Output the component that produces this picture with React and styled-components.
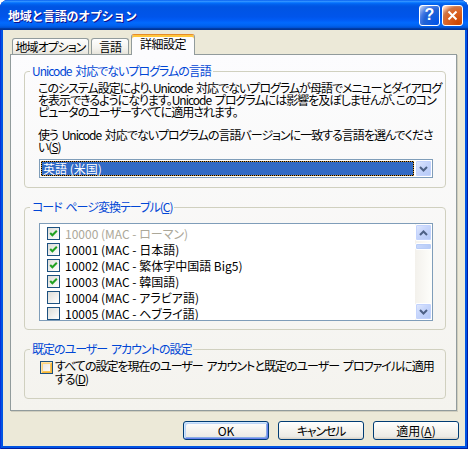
import React from 'react'
import styled, { createGlobalStyle, css } from 'styled-components'

const GlobalStyle = createGlobalStyle`
  html, body { margin: 0; padding: 0; background: #fff; }
  body {
    font-family: "Noto Sans CJK JP", "Noto Sans", sans-serif;
    font-size: 12px;
    font-feature-settings: "palt";
    letter-spacing: -1px;
    word-spacing: 2px;
    color: #000;
  }
`

const Window = styled.div`
  width: 468px;
  height: 449px;
  display: flex;
  flex-direction: column;
  background: #0054e3;
  border-radius: 8px 8px 0 0;
  overflow: hidden;
  box-shadow: inset 1px 0 #0831d9, inset -1px 0 #001ea0, inset 0 -1px #001ea0;
`

const TitleBar = styled.div`
  flex: none;
  height: 30px;
  display: flex;
  align-items: center;
  padding: 0 5px 0 8px;
  background: linear-gradient(to bottom, #0058ee 0%, #3593ff 4%, #288eff 6%, #127dff 8%, #036ffc 10%, #0262ee 14%, #0057e5 20%, #0054e3 24%, #0055eb 56%, #005bf5 66%, #026afe 76%, #0062ef 86%, #0052d6 92%, #0040ab 94%, #003092 100%);
`

const TitleText = styled.div`
  flex: 1;
  color: #fff;
  font-weight: bold;
  font-size: 12px;
  font-feature-settings: normal;
  letter-spacing: -0.3px;
  text-shadow: 1px 1px #0f1089;
`

const CaptionButton = styled.div`
  width: 21px;
  height: 21px;
  box-sizing: border-box;
  margin-left: 2px;
  border: 1px solid #fff;
  border-radius: 3px;
  display: flex;
  align-items: center;
  justify-content: center;
  color: #fff;
  font-family: "Liberation Sans", sans-serif;
  font-weight: bold;
  font-size: 16px;
  letter-spacing: 0;
  background: ${p => p.$close
    ? 'radial-gradient(circle at 80% 90%, #cc4600 0%, #dc6527 55%, #cd7546 70%, #ffccb2 90%, #fff 100%)'
    : 'radial-gradient(circle at 90% 90%, #0054e9 0%, #2263d5 55%, #4479e4 70%, #a3bbec 90%, #fff 100%)'};
`

const Body = styled.div`
  flex: 1;
  margin: 0 3px 3px;
  background: #ece9d8;
  padding: 4px 8px 0 7px;
  display: flex;
  flex-direction: column;
`

const TabRow = styled.div`
  height: 20px;
  display: flex;
  align-items: flex-end;
  gap: 2px;
  padding-left: 2px;
`

const Tab = styled.div`
  box-sizing: border-box;
  width: ${p => p.$w}px;
  height: 16px;
  border: 1px solid #919b9c;
  border-bottom: none;
  border-radius: 3px 3px 0 0;
  background: linear-gradient(#fefefe, #f4f3ee 60%, #e6e4db);
  display: flex;
  align-items: center;
  justify-content: center;
  line-height: 13px;
  white-space: nowrap;
  ${p => p.$active && css`
    position: relative;
    z-index: 1;
    height: 21px;
    margin-bottom: -1px;
    padding-bottom: 3px;
    border-top: 1px solid #e68b2c;
    background: #fcfcfe;
    box-shadow: inset 0 2px #ffc73c;
    letter-spacing: -0.5px;
  `}
`

const Panel = styled.div`
  box-sizing: border-box;
  height: 357px;
  border: 1px solid #919b9c;
  background: linear-gradient(#fcfcfe, #f4f3ee);
  padding: 9px 10px 0 13px;
  box-shadow: 1px 1px #d0cebf;
`

const Group = styled.fieldset`
  margin: 0;
  padding: 0;
  min-width: 0;
  border: 1px solid #d0d0bf;
  border-radius: 4px;
  & + & { margin-top: 12px; }
`

const Legend = styled.legend`
  margin-left: 5px;
  padding: 0 2px;
  color: #0046d5;
  line-height: 14px;
`

const GroupBody = styled.div`
  padding: ${p => p.$pad};
`

const Para = styled.p`
  margin: ${p => p.$mt || 0}px 0 0;
  line-height: 12px;
  white-space: nowrap;
`

const Key = styled.span`
  text-decoration: underline;
  text-underline-offset: 1px;
`

const Combo = styled.div`
  box-sizing: border-box;
  height: 19px;
  margin: 6px 0 0 1px;
  border: 1px solid #7f9db9;
  background: #fff;
  display: flex;
`

const ComboValue = styled.div`
  flex: 1;
  margin: 1px;
  padding-left: 1px;
  border: 1px dotted #ce953a;
  background: linear-gradient(#316ac5, #316ac5) padding-box, linear-gradient(#000, #000) border-box;
  color: #fff;
  line-height: 13px;
  letter-spacing: 0;
  word-spacing: 0;
  white-space: nowrap;
`

const ArrowButton = styled.div`
  box-sizing: border-box;
  width: 17px;
  height: 17px;
  flex: none;
  border: 1px solid #fff;
  border-radius: 2px;
  background: linear-gradient(135deg, #e2eafe 0%, #c6d5fb 45%, #b3c8f6 100%);
  box-shadow: inset 0 0 0 1px #c3d3fd;
  display: flex;
  align-items: center;
  justify-content: center;
`

const List = styled.div`
  box-sizing: border-box;
  height: 98px;
  margin-left: 1px;
  border: 1px solid #7f9db9;
  background: #fff;
  display: flex;
  overflow: hidden;
`

const Rows = styled.div`
  flex: 1;
  padding-top: 1px;
  overflow: hidden;
`

const Row = styled.div`
  height: 16px;
  display: flex;
  align-items: center;
  gap: 5px;
  padding-left: 7px;
  white-space: nowrap;
  letter-spacing: 0;
  word-spacing: 0;
  color: ${p => p.$disabled ? '#aca899' : '#000'};
`

const Box = styled.span`
  box-sizing: border-box;
  width: 13px;
  height: 13px;
  flex: none;
  border: 1px solid #1c5180;
  background: linear-gradient(135deg, #dcdcd7, #fff);
  display: flex;
  align-items: center;
  justify-content: center;
  ${p => p.$hot && css`
    background: linear-gradient(135deg, #e3e2dc, #fff);
    box-shadow: inset 1px 1px #fee3a3, inset -1px -1px #f8b636, inset 2px 2px #fcd37c, inset -2px -2px #f9c55a;
  `}
`

const ScrollBar = styled.div`
  width: 17px;
  flex: none;
  display: flex;
  flex-direction: column;
  background: linear-gradient(to right, #f3f1ec, #fefefb);
`

const Track = styled.div`
  flex: 1;
  padding-top: 2px;
`

const Thumb = styled.div`
  box-sizing: border-box;
  height: 7px;
  border: 1px solid #fff;
  border-radius: 2px;
  background: linear-gradient(to right, #c9d8fc, #b6cbf7);
  box-shadow: inset 0 0 0 1px #b8cdf8;
`

const CheckRow = styled.div`
  display: flex;
  align-items: flex-start;
  gap: 2px;
  padding: 3px 0 13px 15px;
  line-height: 13px;
  white-space: nowrap;
  ${Box} { margin-top: 2px; }
`

const ButtonRow = styled.div`
  display: flex;
  justify-content: flex-end;
  gap: 9px;
  margin: 10px -2px 0 0;
`

const Button = styled.div`
  box-sizing: border-box;
  width: 86px;
  height: 19px;
  border: 1px solid #003c74;
  border-radius: 3px;
  background: linear-gradient(#fff, #f4f3ee 50%, #ecebe6 85%, #d6d0c5);
  display: flex;
  align-items: center;
  justify-content: center;
  line-height: 13px;
  letter-spacing: ${p => p.$tight ? '-1.2px' : '0'};
  ${p => p.$default && css`
    box-shadow: inset 1px 1px #cee7ff, inset -1px -1px #6982ee, inset 2px 2px #bcd4f6, inset -2px -2px #89ade4;
  `}
`

const Chevron = ({ up }) => (
  <svg width="9" height="6" viewBox="0 0 9 6">
    <path d={up ? 'M1 5 L4.5 1.5 L8 5' : 'M1 1 L4.5 4.5 L8 1'} fill="none" stroke="#4d6185" strokeWidth="2" />
  </svg>
)

const Check = () => (
  <svg width="11" height="11" viewBox="0 0 11 11">
    <path d="M2.2 5 L4.4 7.3 L8.8 2.8" fill="none" stroke="#21a121" strokeWidth="2" />
  </svg>
)

const CloseGlyph = () => (
  <svg width="11" height="11" viewBox="0 0 11 11">
    <path d="M1.5 1.5 L9.5 9.5 M9.5 1.5 L1.5 9.5" stroke="#fff" strokeWidth="2" />
  </svg>
)

const codePages = [
  { label: '10000 (MAC - ローマン)', checked: true, disabled: true },
  { label: '10001 (MAC - 日本語)', checked: true },
  { label: '10002 (MAC - 繁体字中国語 Big5)', checked: true },
  { label: '10003 (MAC - 韓国語)', checked: true },
  { label: '10004 (MAC - アラビア語)', checked: false },
  { label: '10005 (MAC - ヘブライ語)', checked: false },
]

export default function App() {
  return (
    <>
      <GlobalStyle />
      <Window>
        <TitleBar>
          <TitleText>地域と言語のオプション</TitleText>
          <CaptionButton>?</CaptionButton>
          <CaptionButton $close><CloseGlyph /></CaptionButton>
        </TitleBar>
        <Body>
          <TabRow>
            <Tab $w={77}>地域オプション</Tab>
            <Tab $w={38}>言語</Tab>
            <Tab $w={64} $active>詳細設定</Tab>
          </TabRow>
          <Panel>
            <Group>
              <Legend>Unicode 対応でないプログラムの言語</Legend>
              <GroupBody $pad="4px 12px 9px 13px">
                <Para>
                  このシステム設定により、Unicode 対応でないプログラムが母語でメニューとダイアログ<br />
                  を表示できるようになります。Unicode プログラムには影響を及ぼしませんが、このコン<br />
                  ピュータのユーザーすべてに適用されます。
                </Para>
                <Para $mt={11}>
                  使う Unicode 対応でないプログラムの言語バージョンに一致する言語を選んでくださ<br />
                  い(<Key>S</Key>)
                </Para>
                <Combo>
                  <ComboValue>英語 (米国)</ComboValue>
                  <ArrowButton><Chevron /></ArrowButton>
                </Combo>
              </GroupBody>
            </Group>
            <Group>
              <Legend>コード ページ変換テーブル(<Key>C</Key>)</Legend>
              <GroupBody $pad="9px 12px 8px 13px">
                <List>
                  <Rows>
                    {codePages.map(cp => (
                      <Row key={cp.label} $disabled={cp.disabled}>
                        <Box>{cp.checked && <Check />}</Box>
                        {cp.label}
                      </Row>
                    ))}
                  </Rows>
                  <ScrollBar>
                    <ArrowButton><Chevron up /></ArrowButton>
                    <Track><Thumb /></Track>
                    <ArrowButton><Chevron /></ArrowButton>
                  </ScrollBar>
                </List>
              </GroupBody>
            </Group>
            <Group>
              <Legend>既定のユーザー アカウントの設定</Legend>
              <CheckRow>
                <Box $hot />
                <span>
                  すべての設定を現在のユーザー アカウントと既定のユーザー プロファイルに適用<br />
                  する(<Key>D</Key>)
                </span>
              </CheckRow>
            </Group>
          </Panel>
          <ButtonRow>
            <Button $default>OK</Button>
            <Button $tight>キャンセル</Button>
            <Button>適用(<Key>A</Key>)</Button>
          </ButtonRow>
        </Body>
      </Window>
    </>
  )
}
